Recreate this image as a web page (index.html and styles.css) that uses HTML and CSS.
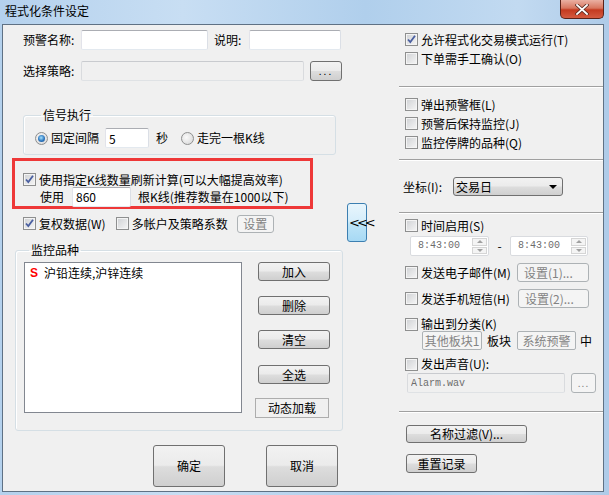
FILE: index.html
```html
<!DOCTYPE html>
<html lang="zh-CN">
<head>
    <meta charset="UTF-8">
    <meta name="viewport" content="width=device-width, initial-scale=1.0">
    <title>程式化条件设定</title>
    <link rel="stylesheet" href="styles.css">
</head>
<body>
    <!-- Dialog window -->
    <div class="window">
        <div class="titlebar">
            <span class="title">程式化条件设定</span>
            <span class="close">
                <svg width="14" height="11" viewBox="0 0 14 11">
                    <path d="M2 1 L12 10 M12 1 L2 10" stroke="#5a2a22" stroke-width="3.4" stroke-linecap="square"/>
                    <path d="M2 1 L12 10 M12 1 L2 10" stroke="#fff" stroke-width="1.8" stroke-linecap="square"/>
                </svg>
            </span>
        </div>

        <div class="client">
            <!-- left side -->
            <div class="left">
                <div class="row row-name">
                    <span class="lbl">预警名称:</span>
                    <input class="text w-name" type="text" value="">
                    <span class="lbl lbl-desc">说明:</span>
                    <input class="text w-desc" type="text" value="">
                </div>
                <div class="row row-strategy">
                    <span class="lbl">选择策略:</span>
                    <input class="text w-strategy" type="text" value="" disabled>
                    <button class="btn btn-dots">...</button>
                </div>

                <fieldset class="group signal">
                    <legend>信号执行</legend>
                    <div class="row radio-row">
                        <span class="radio on"></span>
                        <span class="radio-text">固定间隔</span>
                        <input class="text w-sec" type="text" value="5">
                        <span class="sec">秒</span>
                        <span class="radio radio2"></span>
                        <span class="radio-text">走完一根K线</span>
                    </div>
                </fieldset>

                <div class="redbox">
                    <label class="check">
                        <span class="box on"><svg width="11" height="11" viewBox="0 0 11 11"><path d="M2 5.5 L4.3 8 L9 1.8" fill="none" stroke="#4a5fa0" stroke-width="1.8"/></svg></span>
                        使用指定K线数量刷新计算(可以大幅提高效率)
                    </label>
                    <div class="row use-row">
                        <span>使用</span>
                        <input class="text w-bars" type="text" value="860">
                        <span class="bars-note">根K线(推荐数量在1000以下)</span>
                    </div>
                </div>

                <div class="row row-fq">
                    <label class="check">
                        <span class="box on"><svg width="11" height="11" viewBox="0 0 11 11"><path d="M2 5.5 L4.3 8 L9 1.8" fill="none" stroke="#4a5fa0" stroke-width="1.8"/></svg></span>
                        复权数据(W)
                    </label>
                    <label class="check multi">
                        <span class="box"></span>
                        多帐户及策略系数
                    </label>
                    <button class="btn disabled btn-set">设置</button>
                </div>

                <fieldset class="group watch">
                    <legend>监控品种</legend>
                    <div class="watch-body">
                        <div class="list">
                            <div class="item"><span class="s-mark">S</span>沪铅连续,沪锌连续</div>
                        </div>
                        <div class="list-buttons">
                            <button class="btn">加入</button>
                            <button class="btn">删除</button>
                            <button class="btn">清空</button>
                            <button class="btn">全选</button>
                            <button class="btn flat">动态加载</button>
                        </div>
                    </div>
                </fieldset>

                <div class="actions">
                    <button class="btn big">确定</button>
                    <button class="btn big">取消</button>
                </div>
            </div>

            <!-- collapse toggle -->
            <div class="middle">
                <button class="collapse">&lt;&lt;&lt;</button>
            </div>

            <!-- right side -->
            <div class="right">
                <label class="check rc first">
                    <span class="box on"><svg width="11" height="11" viewBox="0 0 11 11"><path d="M2 5.5 L4.3 8 L9 1.8" fill="none" stroke="#4a5fa0" stroke-width="1.8"/></svg></span>
                    允许程式化交易模式运行(T)
                </label>
                <label class="check rc"><span class="box"></span>下单需手工确认(O)</label>

                <div class="sep sep1"></div>
                <label class="check rc r-alert"><span class="box"></span>弹出预警框(L)</label>
                <label class="check rc"><span class="box"></span>预警后保持监控(J)</label>
                <label class="check rc"><span class="box"></span>监控停牌的品种(Q)</label>

                <div class="sep sep2"></div>
                <div class="row axis-row">
                    <span class="axis-lbl">坐标(I):</span>
                    <div class="select"><span>交易日</span><span class="arrow"></span></div>
                </div>

                <div class="sep sep3"></div>
                <label class="check rc r-time"><span class="box"></span>时间启用(S)</label>
                <div class="row time-row">
                    <div class="spin">
                        <span class="spin-val">8:43:00</span>
                        <span class="spin-btns"><span class="up"></span><span class="down"></span></span>
                    </div>
                    <span class="dash">-</span>
                    <div class="spin spin2">
                        <span class="spin-val">8:43:00</span>
                        <span class="spin-btns"><span class="up"></span><span class="down"></span></span>
                    </div>
                </div>

                <div class="row send-row">
                    <label class="check"><span class="box"></span>发送电子邮件(M)</label>
                    <button class="btn disabled btn-cfg">设置(1)...</button>
                </div>
                <div class="row send-row">
                    <label class="check"><span class="box"></span>发送手机短信(H)</label>
                    <button class="btn disabled btn-cfg cfg2">设置(2)...</button>
                </div>

                <label class="check rc r-out"><span class="box"></span>输出到分类(K)</label>
                <div class="row block-row">
                    <button class="btn disabled blk">其他板块1</button>
                    <span class="blk-lbl">板块</span>
                    <button class="btn disabled blk blk2">系统预警</button>
                    <span class="blk-in">中</span>
                </div>

                <label class="check rc r-sound"><span class="box"></span>发出声音(U):</label>
                <div class="row sound-row">
                    <input class="text w-sound" type="text" value="Alarm.wav" disabled>
                    <button class="btn disabled btn-browse">...</button>
                </div>

                <div class="sep sep4"></div>
                <button class="btn btn-filter">名称过滤(V)...</button>
                <button class="btn btn-reset">重置记录</button>
            </div>
        </div>
    </div>
</body>
</html>
```

FILE: styles.css
```css
/* Win7 style dialog */
* {
    box-sizing: border-box;
}

body {
    margin: 0;
    font: 12px/14px "Noto Sans CJK SC", "Liberation Sans", sans-serif;
    color: #000;
}

.window {
    width: 609px;
    height: 495px;
    display: flex;
    flex-direction: column;
    background: linear-gradient(90deg, #b4d1ed, #c8def3 30%, #b0cfec 60%, #c2daf1 85%, #aecbe8);
    overflow: hidden;
}

.titlebar {
    height: 24px;
    display: flex;
    justify-content: space-between;
}

.title {
    padding: 4px 0 0 5px;
}

.close {
    width: 44px;
    height: 19px;
    margin-right: 5px;
    border: 1px solid #5b2219;
    border-top: none;
    border-radius: 0 0 5px 5px;
    background: linear-gradient(#eab0a3, #d8765f 45%, #c43a20 55%, #d45a40);
    display: flex;
    align-items: center;
    justify-content: center;
}

.client {
    flex: 1;
    margin: 0 5px 3px 2px;
    border: 1px solid #5f7184;
    background: #f0f0f0;
    display: flex;
}

.row {
    display: flex;
    align-items: center;
}

/* form controls */
.text {
    height: 20px;
    margin: 0;
    padding: 0 3px;
    border: 1px solid;
    border-color: #abadb3 #dbdfe6 #e3e9ef #e2e3ea;
    border-radius: 2px;
    background: #fff;
    font: 12px "Noto Sans CJK SC", sans-serif;
    color: #000;
    outline: none;
}

.text:disabled {
    background: #f0f0f0;
    border-color: #c9cbcf #d9dbde #dfe2e5 #d9dbde;
}

.btn {
    height: 19px;
    margin: 0;
    padding: 0;
    border: 1px solid #707070;
    border-radius: 3px;
    background: linear-gradient(#f2f2f2, #ebebeb 48%, #dddddd 52%, #cfcfcf);
    font: 12px/14px "Noto Sans CJK SC", sans-serif;
    color: #000;
}

.btn.disabled {
    border-color: #adb2b5;
    background: #f4f4f4;
    color: #838383;
}

.btn.flat {
    border-color: #adadad;
    border-radius: 0;
    background: #f0f0f0;
}

.check {
    display: flex;
    align-items: center;
    gap: 3px;
    white-space: nowrap;
}

.box {
    width: 13px;
    height: 13px;
    flex: none;
    border: 1px solid #8e8f8f;
    background: linear-gradient(135deg, #cfd1d4, #f6f6f6);
    box-shadow: inset 0 0 0 1px #f4f4f4;
    display: flex;
    align-items: center;
    justify-content: center;
}

.radio {
    width: 13px;
    height: 13px;
    flex: none;
    border: 1px solid #8e8f8f;
    border-radius: 50%;
    background: radial-gradient(circle at 40% 40%, #fafafa, #d4d4d4);
    display: flex;
    align-items: center;
    justify-content: center;
}

.radio.on::after {
    content: "";
    width: 7px;
    height: 7px;
    border-radius: 50%;
    background: radial-gradient(circle at 45% 40%, #a5e2fd, #2e77c0 55%, #174a85);
}

.group {
    margin: 0;
    border: 1px solid #d5dfe5;
    border-radius: 3px;
    box-shadow: inset 1px 1px #fff;
}

.group legend {
    padding: 0 2px;
    line-height: 14px;
}

.sep {
    height: 2px;
    border-top: 1px solid #a0a0a0;
    border-bottom: 1px solid #fff;
}

/* left column */
.left {
    width: 344px;
    flex: none;
}

.row-name {
    height: 20px;
    margin: 5px 0 0 20px;
}

.lbl {
    width: 58px;
    flex: none;
}

.w-name {
    width: 127px;
}

.lbl-desc {
    width: 35px;
    margin-left: 6px;
}

.w-desc {
    width: 92px;
}

.row-strategy {
    height: 20px;
    margin: 11px 0 0 20px;
}

.w-strategy {
    width: 223px;
}

.btn-dots {
    width: 32px;
    height: 20px;
    margin-left: 6px;
    letter-spacing: 2px;
    font-size: 10px;
}

.signal {
    width: 313px;
    margin: 27px 0 0 20px;
    padding: 0 0 6px 11px;
}

.signal legend {
    margin-left: 6px;
}

.radio-row {
    height: 20px;
    margin-top: 6px;
}

.radio-text {
    margin-left: 3px;
}

.w-sec {
    width: 44px;
    margin-left: 6px;
}

.sec {
    margin-left: 7px;
}

.radio2 {
    margin-left: 13px;
}

.redbox {
    width: 301px;
    height: 51px;
    margin: 3px 0 0 9px;
    padding: 11px 0 0 8px;
    border: 3px solid #ee3838;
}

.redbox .check {
    height: 15px;
}

.use-row {
    height: 19px;
    margin-left: 17px;
}

.w-bars {
    width: 59px;
    height: 20px;
    margin-left: 8px;
}

.bars-note {
    margin-left: 7px;
}

.row-fq {
    height: 17px;
    margin: 6px 0 0 20px;
}

.multi {
    margin-left: 10px;
}

.btn-set {
    width: 37px;
    height: 18px;
    margin-left: 9px;
}

.watch {
    width: 328px;
    margin: 11px 0 0 12px;
    padding: 0 0 12px 8px;
}

.watch legend {
    margin-left: 5px;
}

.watch-body {
    display: flex;
    margin-top: 5px;
}

.list {
    width: 218px;
    height: 151px;
    border: 1px solid #828790;
    background: #fff;
    padding: 3px 0 0 5px;
}

.item {
    display: flex;
    align-items: center;
}

.s-mark {
    width: 14px;
    color: #f00;
    font: bold 12px "Liberation Sans", sans-serif;
}

.list-buttons {
    display: flex;
    flex-direction: column;
    margin-left: 16px;
}

.list-buttons .btn {
    width: 72px;
    height: 19px;
    margin-bottom: 15px;
}

.list-buttons .btn:nth-child(3) {
    margin-bottom: 16px;
}

.list-buttons .btn:nth-child(4) {
    margin-bottom: 14px;
}

.list-buttons .flat {
    width: 74px;
    height: 20px;
    margin: 0 0 0 -3px;
}

.actions {
    display: flex;
    gap: 41px;
    margin: 14px 0 0 150px;
}

.btn.big {
    width: 72px;
    height: 42px;
}

/* middle */
.middle {
    width: 52px;
    flex: none;
}

.collapse {
    width: 20px;
    height: 39px;
    margin-top: 178px;
    padding: 0 0 0 1px;
    border: 1px solid #3c7fb1;
    border-radius: 3px;
    background: linear-gradient(#e8f5fc, #d6eefb 45%, #bde4f7 55%, #a7d9f4);
    font: 13px "DejaVu Sans", sans-serif;
    letter-spacing: -3px;
    color: #000;
}

/* right column */
.right {
    flex: 1;
    padding-top: 5px;
    display: flex;
    flex-direction: column;
}

.rc {
    height: 19px;
    padding-left: 6px;
}

.sep1 {
    margin-top: 18px;
}

.r-alert {
    margin-top: 7px;
}

.sep2 {
    margin-top: 7px;
}

.axis-row {
    height: 19px;
    margin: 16px 0 0 4px;
}

.axis-lbl {
    width: 50px;
}

.select {
    width: 110px;
    height: 19px;
    border: 1px solid #707070;
    border-radius: 3px;
    background: linear-gradient(#f2f2f2, #ebebeb 48%, #dddddd 52%, #cfcfcf);
    display: flex;
    align-items: center;
    justify-content: space-between;
    padding-left: 2px;
}

.arrow {
    width: 0;
    height: 0;
    margin-right: 5px;
    border-left: 4px solid transparent;
    border-right: 4px solid transparent;
    border-top: 4px solid #000;
}

.sep3 {
    margin-top: 16px;
}

.r-time {
    margin-top: 2px;
}

.time-row {
    height: 20px;
    margin: 1px 0 0 11px;
}

.spin {
    width: 79px;
    height: 20px;
    border: 1px solid #d9dbdf;
    border-radius: 2px;
    background: #fff;
    display: flex;
}

.spin2 {
    width: 78px;
}

.spin-val {
    flex: 1;
    padding-left: 7px;
    font: 10px/18px "Liberation Mono", monospace;
    color: #6d6d6d;
}

.spin-btns {
    width: 17px;
    padding: 1px;
    display: flex;
    flex-direction: column;
    gap: 1px;
}

.spin-btns span {
    flex: 1;
    border: 1px solid #d5d5d5;
    background: #f4f4f4;
    display: flex;
    align-items: center;
    justify-content: center;
}

.up::after,
.down::after {
    content: "";
    border-left: 3px solid transparent;
    border-right: 3px solid transparent;
}

.up::after {
    border-bottom: 3px solid #a0a0a0;
}

.down::after {
    border-top: 3px solid #a0a0a0;
}

.dash {
    width: 21px;
    text-align: center;
}

.send-row {
    height: 19px;
    margin-top: 7px;
    padding-left: 6px;
}

.btn-cfg {
    width: 72px;
    margin-left: auto;
    margin-right: 14px;
    text-align: left;
    padding-left: 6px;
}

.cfg2 {
    width: 71px;
}

.r-out {
    height: 14px;
    margin-top: 9px;
}

.block-row {
    height: 19px;
    padding-left: 23px;
}

.blk {
    width: 60px;
    height: 19px;
    border-radius: 2px;
    border-color: #c3c6c9;
}

.blk2 {
    width: 59px;
}

.blk-lbl {
    width: 35px;
    padding-left: 5px;
}

.blk-in {
    margin-left: 4px;
}

.r-sound {
    height: 14px;
    margin-top: 7px;
}

.sound-row {
    height: 20px;
    margin: 2px 0 0 8px;
}

.w-sound {
    width: 158px;
    background: #fff;
    font: 10px "Liberation Mono", monospace;
    color: #6d6d6d;
}

.btn-browse {
    width: 25px;
    height: 20px;
    margin-left: 6px;
    letter-spacing: 1px;
    font-size: 10px;
}

.sep4 {
    margin-top: 18px;
}

.btn-filter {
    width: 121px;
    height: 18px;
    margin: 12px 0 0 7px;
}

.btn-reset {
    width: 71px;
    margin: 11px 0 0 7px;
}
```
